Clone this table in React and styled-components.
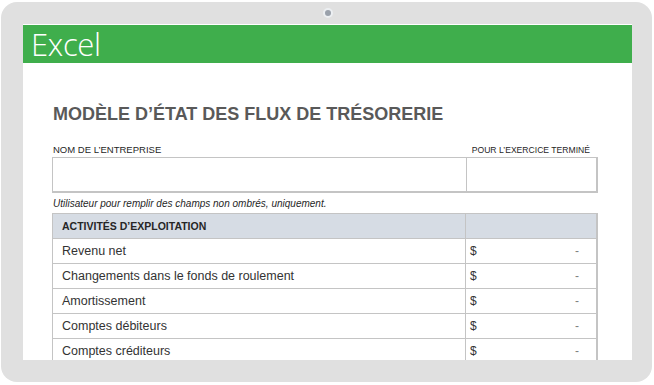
import React from "react";
import styled, { createGlobalStyle } from "styled-components";

const GlobalStyle = createGlobalStyle`
  html, body {
    margin: 0;
    padding: 0;
    background: #ffffff;
  }
  * {
    box-sizing: border-box;
  }
`;

// device frame
const Frame = styled.div`
  width: 651px;
  height: 380px;
  margin: 2px 0 0 1px;
  background: #e0e0e0;
  border-radius: 16px;
  display: flex;
  flex-direction: column;
  padding: 0 20px 22px 22px;
`;

const TopBand = styled.div`
  height: 22px;
  display: flex;
  align-items: center;
  justify-content: center;
`;

const Camera = styled.div`
  width: 10px;
  height: 10px;
  border-radius: 50%;
  background: #9aa1ab;
  border: 2px solid #eceff2;
`;

const Screen = styled.div`
  flex: 1;
  background: #ffffff;
  overflow: hidden;
  display: flex;
  flex-direction: column;
  padding-top: 1px;
`;

const AppBar = styled.div`
  height: 38px;
  background: #3fae4c;
  display: flex;
  align-items: center;
  padding-left: 8px;
`;

const AppName = styled.span`
  font-family: "Open Sans", "Liberation Sans", sans-serif;
  font-weight: 300;
  font-size: 31px;
  color: #ffffff;
  letter-spacing: -0.3px;
`;

// sheet
const Sheet = styled.div`
  padding: 0 34px 0 29px;
  font-family: "Liberation Sans", Arial, sans-serif;
`;

const Title = styled.h1`
  margin: 40px 0 0 1px;
  font-size: 18px;
  font-weight: 700;
  color: #595959;
  line-height: 22px;
`;

const LabelRow = styled.div`
  display: grid;
  grid-template-columns: 413px 132px;
  margin-top: 20px;
  color: #262626;
  line-height: 10px;
`;

const Label = styled.div`
  text-align: ${(p) => (p.$right ? "right" : "left")};
  font-size: ${(p) => (p.$right ? "8.6px" : "9.5px")};
  padding: ${(p) => (p.$right ? "0 7px 0 0" : "0 0 0 1px")};
  white-space: nowrap;
`;

const InputRow = styled.div`
  display: grid;
  grid-template-columns: 413px 132px;
  height: 36px;
  margin-top: 2px;
  border: 1px solid #c4c4c4;
  border-right-width: 2px;
  border-bottom-width: 2px;
`;

const InputCell = styled.div`
  border-left: ${(p) => (p.$first ? "none" : "1px solid #c4c4c4")};
`;

const Note = styled.div`
  font-size: 10px;
  font-style: italic;
  color: #262626;
  margin: 5px 0 0 1px;
  line-height: 11px;
`;

const Table = styled.div`
  margin-top: 4px;
  border: 1px solid #c4c4c4;
  border-right-width: 2px;
  border-bottom: none;
`;

const Row = styled.div`
  display: grid;
  grid-template-columns: 412px 132px;
  height: 25px;
  align-items: stretch;
  border-bottom: 1px solid #c4c4c4;
  background: ${(p) => (p.$head ? "#d6dce4" : "#ffffff")};
`;

const Cell = styled.div`
  display: flex;
  align-items: center;
  padding-left: 9px;
  font-size: ${(p) => (p.$head ? "10.5px" : "12.5px")};
  font-weight: ${(p) => (p.$head ? 700 : 400)};
  color: ${(p) => (p.$head ? "#262626" : "#333333")};
`;

const AmountCell = styled.div`
  display: flex;
  align-items: center;
  justify-content: space-between;
  padding: 0 18px 0 4px;
  border-left: 1px solid #c4c4c4;
  font-size: 12px;
  color: #333333;
`;

const Dash = styled.span`
  color: #7f7f7f;
`;

const rows = [
  "Revenu net",
  "Changements dans le fonds de roulement",
  "Amortissement",
  "Comptes débiteurs",
  "Comptes créditeurs",
];

export default function App() {
  return (
    <>
      <GlobalStyle />
      <Frame>
        <TopBand>
          <Camera />
        </TopBand>
        <Screen>
          <AppBar>
            <AppName>Excel</AppName>
          </AppBar>
          <Sheet>
            <Title>MODÈLE D’ÉTAT DES FLUX DE TRÉSORERIE</Title>
            <LabelRow>
              <Label>NOM DE L’ENTREPRISE</Label>
              <Label $right>POUR L’EXERCICE TERMINÉ</Label>
            </LabelRow>
            <InputRow>
              <InputCell $first />
              <InputCell />
            </InputRow>
            <Note>Utilisateur pour remplir des champs non ombrés, uniquement.</Note>
            <Table>
              <Row $head>
                <Cell $head>ACTIVITÉS D’EXPLOITATION</Cell>
                <AmountCell />
              </Row>
              {rows.map((r) => (
                <Row key={r}>
                  <Cell>{r}</Cell>
                  <AmountCell>
                    <span>$</span>
                    <Dash>-</Dash>
                  </AmountCell>
                </Row>
              ))}
            </Table>
          </Sheet>
        </Screen>
      </Frame>
    </>
  );
}
